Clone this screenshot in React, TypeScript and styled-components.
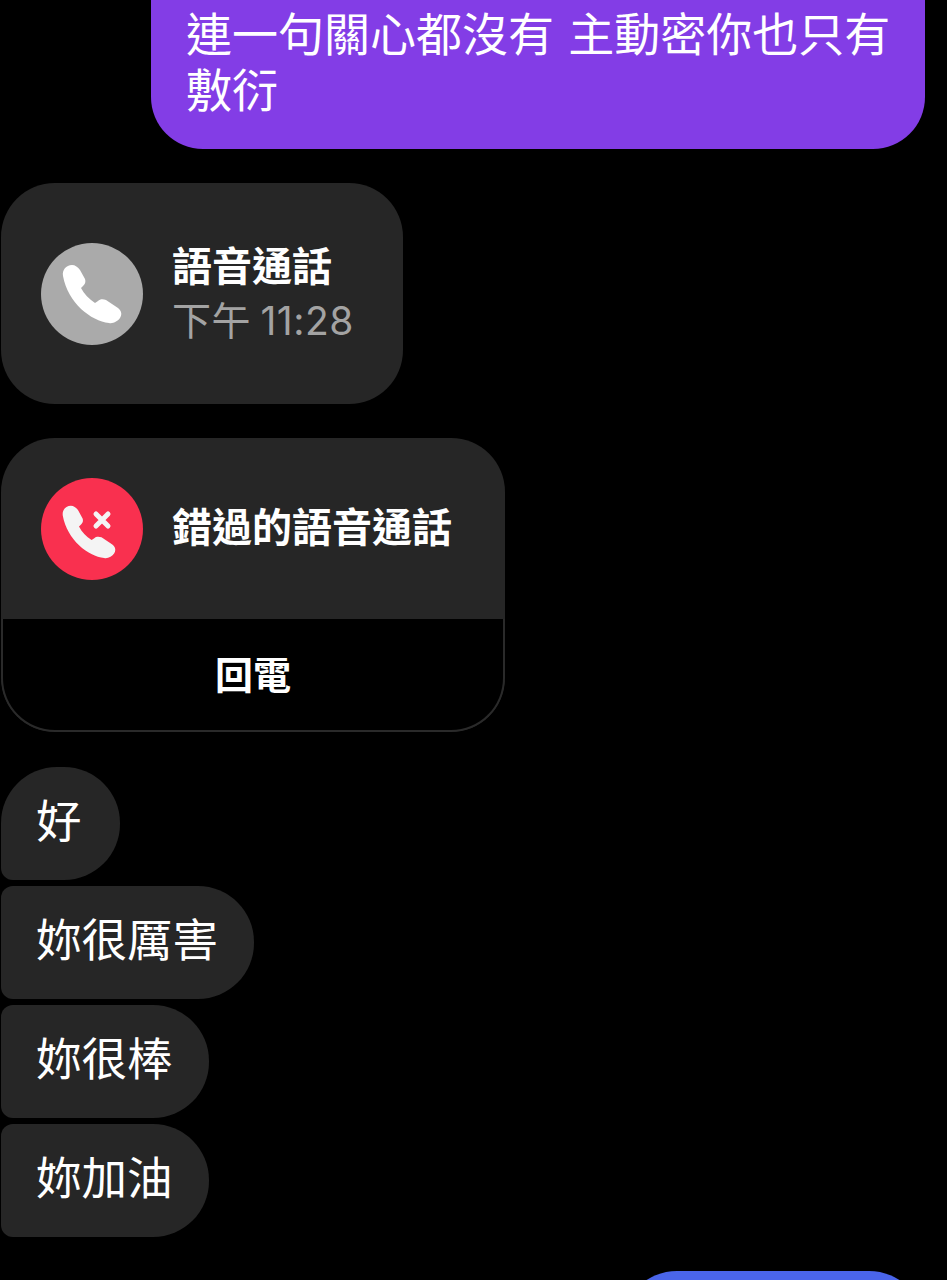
import React from 'react';
import styled, { createGlobalStyle } from 'styled-components';

const GlobalStyle = createGlobalStyle`
  html, body {
    margin: 0;
    padding: 0;
    background: #000;
  }
`;

const HANDSET =
  'M22 33C21 27 25 22 31 22C34 22 37 24 39 27L44 36C45 39 44 41 42 43L40 45C43 51 48 56 54 60L57 58C59 56 62 56 65 57L77 65C81 68 81 72 79 75C77 78 72 81 68 80C50 78 27 60 22 33Z';

const App = () => {
  return (
    <Page>
      <GlobalStyle />
      <SentBubble>連一句關心都沒有 主動密你也只有敷衍</SentBubble>

      <CallCard>
        <CallRow $height={221}>
          <CallIcon $bg="#aaaaaa">
            <svg width="102" height="102" viewBox="0 0 102 102">
              <path d={HANDSET} fill="#fff" />
            </svg>
          </CallIcon>
          <CallText>
            <CallTitle>語音通話</CallTitle>
            <CallTime>下午 11:28</CallTime>
          </CallText>
        </CallRow>
      </CallCard>

      <MissedCard>
        <CallRow $height={181}>
          <CallIcon $bg="#f9304f">
            <svg width="102" height="102" viewBox="0 0 102 102">
              <path d={HANDSET} fill="#f4f4f4" transform="translate(2 8) scale(0.9)" />
              <path d="M55 36L67 48M67 36L55 48" stroke="#f4f4f4" strokeWidth="5" strokeLinecap="round" />
            </svg>
          </CallIcon>
          <CallText>
            <CallTitle>錯過的語音通話</CallTitle>
          </CallText>
        </CallRow>
        <CallBack>回電</CallBack>
      </MissedCard>

      <ReceivedGroup>
        <ReceivedBubble $first>好</ReceivedBubble>
        <ReceivedBubble>妳很厲害</ReceivedBubble>
        <ReceivedBubble>妳很棒</ReceivedBubble>
        <ReceivedBubble>妳加油</ReceivedBubble>
      </ReceivedGroup>

      <NextBubble />
    </Page>
  );
};

export default App;

const Page = styled.div`
  display: flex;
  flex-direction: column;
  width: 947px;
  height: 1280px;
  overflow: hidden;
  padding-left: 1px;
  box-sizing: border-box;
  background: #000;
  color: #fff;
  font-family: 'Noto Sans CJK TC', 'Noto Sans', sans-serif;
`;

const SentBubble = styled.div`
  flex: none;
  align-self: flex-end;
  width: 774px;
  height: 149px;
  margin-right: 22px;
  padding: 3px 30px 0 35px;
  box-sizing: border-box;
  background: #833de6;
  border-radius: 0 0 52px 52px;
  font-size: 46px;
  line-height: 56px;
  word-spacing: 4px;
`;

const CallCard = styled.div`
  flex: none;
  align-self: flex-start;
  width: 402px;
  margin-top: 34px;
  background: #262626;
  border-radius: 54px;
`;

const MissedCard = styled.div`
  flex: none;
  align-self: flex-start;
  width: 504px;
  margin-top: 34px;
  background: #262626;
  border-radius: 54px;
  overflow: hidden;
`;

const CallRow = styled.div<{ $height: number }>`
  display: flex;
  align-items: center;
  gap: 29px;
  height: ${(p) => p.$height}px;
  padding-left: 40px;
  box-sizing: border-box;
`;

const CallIcon = styled.div<{ $bg: string }>`
  flex: none;
  width: 102px;
  height: 102px;
  border-radius: 50%;
  background: ${(p) => p.$bg};

  svg {
    display: block;
  }
`;

const CallText = styled.div`
  margin-top: -6px;
`;

const CallTitle = styled.div`
  font-size: 40px;
  font-weight: 600;
  line-height: 53px;
  white-space: nowrap;
`;

const CallTime = styled.div`
  margin: 3px 0 -3px;
  font-family: 'Inter', 'Noto Sans CJK TC', sans-serif;
  font-size: 39px;
  line-height: 53px;
  letter-spacing: 0.5px;
  color: #a3a3a3;
  white-space: nowrap;
  word-spacing: -2px;
`;

const CallBack = styled.div`
  display: flex;
  align-items: center;
  justify-content: center;
  height: 113px;
  padding-bottom: 4px;
  box-sizing: border-box;
  background: #000;
  border: 2px solid #2a2a2a;
  border-top: none;
  border-radius: 0 0 54px 54px;
  font-size: 38px;
  font-weight: 600;
`;

const ReceivedGroup = styled.div`
  display: flex;
  flex: none;
  flex-direction: column;
  align-items: flex-start;
  gap: 6px;
  margin-top: 35px;
`;

const ReceivedBubble = styled.div<{ $first?: boolean }>`
  display: flex;
  align-items: center;
  min-width: 119px;
  height: 113px;
  padding: 0 36px 12px 35px;
  box-sizing: border-box;
  background: #262626;
  border-radius: ${(p) => (p.$first ? '56px 56px 56px 12px' : '12px 56px 56px 12px')};
  font-size: 45.5px;
`;

const NextBubble = styled.div`
  flex: none;
  align-self: flex-end;
  width: 304px;
  height: 113px;
  margin-top: 34px;
  margin-right: 22px;
  background: #4a65ea;
  border-radius: 56px 56px 12px 56px;
`;
